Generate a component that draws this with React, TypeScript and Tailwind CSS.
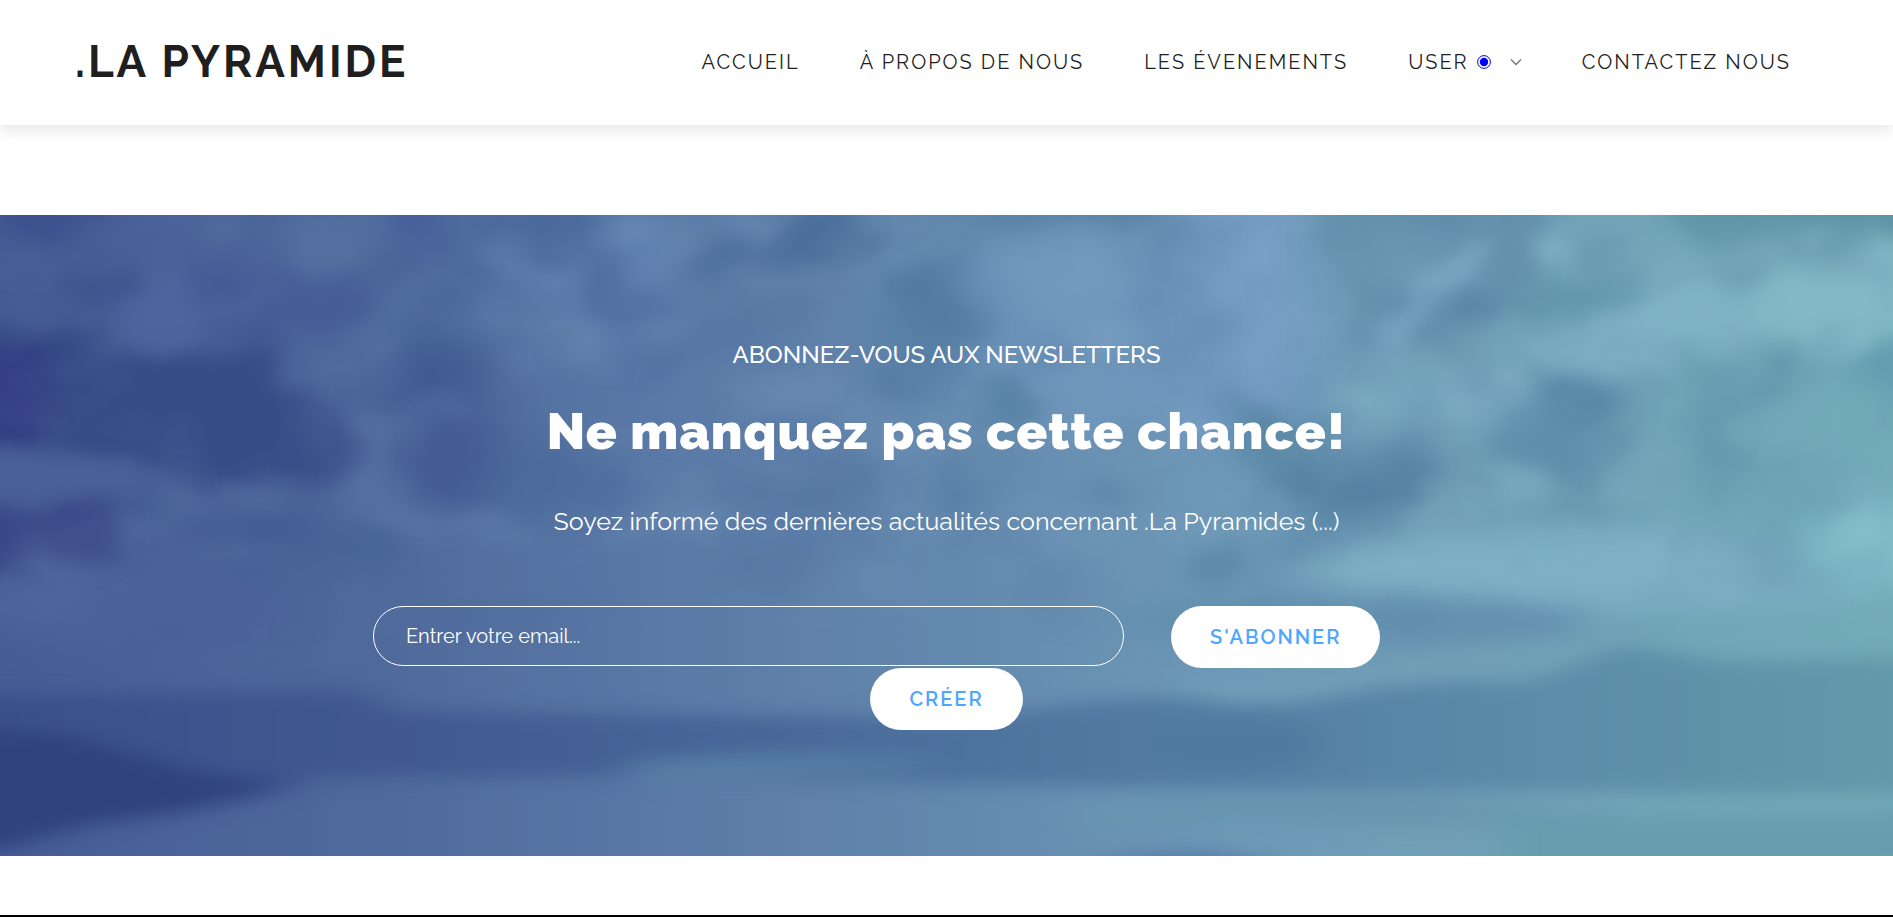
import React from "react";

const navLink = "flex items-center gap-2 whitespace-nowrap hover:text-[#4da6ff]";

function CircleDot() {
  return (
    <svg viewBox="0 0 14 14" className="size-[14px]" aria-hidden="true">
      <circle cx="7" cy="7" r="6.4" fill="none" stroke="#00f" strokeWidth="1" />
      <circle cx="7" cy="7" r="4.2" fill="#00f" />
    </svg>
  );
}

function Chevron() {
  return (
    <svg viewBox="0 0 12 8" className="ml-[11px] h-2 w-3" fill="none" stroke="#777" strokeWidth="1.5" aria-hidden="true">
      <path d="M1 1.5 6 6.5 11 1.5" />
    </svg>
  );
}

/* Cloudy sky with a violet-to-teal tint. */
function Sky() {
  return (
    <svg
      className="absolute inset-0 size-full"
      viewBox="0 0 1893 641"
      preserveAspectRatio="none"
      aria-hidden="true"
    >
      <defs>
        <linearGradient id="tint" x1="0" x2="1" y1="0" y2="0">
          <stop offset="0" stopColor="#475c95" />
          <stop offset="0.2" stopColor="#4e6a9b" />
          <stop offset="0.36" stopColor="#5b7aa7" />
          <stop offset="0.5" stopColor="#6388ad" />
          <stop offset="0.65" stopColor="#6e99b7" />
          <stop offset="0.82" stopColor="#71a3b8" />
          <stop offset="1" stopColor="#73abb7" />
        </linearGradient>
        <linearGradient id="shore" gradientUnits="userSpaceOnUse" x1="0" x2="1893" y1="0" y2="0">
          <stop offset="0" stopColor="#3b4f8c" />
          <stop offset="0.2" stopColor="#40588f" />
          <stop offset="0.4" stopColor="#486798" />
          <stop offset="0.6" stopColor="#527aa2" />
          <stop offset="0.8" stopColor="#5a8ba8" />
          <stop offset="1" stopColor="#6399aa" />
        </linearGradient>
        <linearGradient id="haze" x1="0" x2="0" y1="0" y2="1">
          <stop offset="0" stopColor="#fff" />
          <stop offset="0.5" stopColor="#fff" />
          <stop offset="0.68" stopColor="#000" />
        </linearGradient>
        <mask id="upper">
          <rect width="1893" height="641" fill="url(#haze)" />
        </mask>
        <filter id="soft" x="-20%" y="-40%" width="140%" height="180%" colorInterpolationFilters="sRGB">
          <feGaussianBlur stdDeviation="9" result="b" />
          <feTurbulence type="fractalNoise" baseFrequency="0.014 0.02" numOctaves="3" seed="7" result="n" />
          <feDisplacementMap in="b" in2="n" scale="60" xChannelSelector="R" yChannelSelector="G" />
          <feGaussianBlur stdDeviation="8" />
        </filter>
        <filter id="smooth" x="-20%" y="-40%" width="140%" height="180%" colorInterpolationFilters="sRGB">
          <feGaussianBlur stdDeviation="26 12" />
        </filter>
        <filter id="streak" x="-10%" y="-20%" width="120%" height="140%" colorInterpolationFilters="sRGB">
          <feGaussianBlur stdDeviation="18 9" />
        </filter>
        <filter id="light" x="0" y="0" width="100%" height="100%" colorInterpolationFilters="sRGB">
          <feTurbulence type="fractalNoise" baseFrequency="0.007 0.012" numOctaves="3" seed="21" />
          <feColorMatrix values="0 0 0 0 0.62  0 0 0 0 0.76  0 0 0 0 0.86  1.6 0 0 0 -0.78" />
          <feGaussianBlur stdDeviation="6" />
        </filter>
        <filter id="dark" x="0" y="0" width="100%" height="100%" colorInterpolationFilters="sRGB">
          <feTurbulence type="fractalNoise" baseFrequency="0.008 0.013" numOctaves="3" seed="4" />
          <feColorMatrix values="0 0 0 0 0.16  0 0 0 0 0.3  0 0 0 0 0.5  1.8 0 0 0 -0.86" />
          <feGaussianBlur stdDeviation="6" />
        </filter>
      </defs>
      <rect width="1893" height="641" fill="url(#tint)" />

      <g filter="url(#smooth)">
        <rect x="1170" y="-60" width="135" height="290" fill="#759cc3" />
        <ellipse cx="1060" cy="120" rx="120" ry="110" fill="#6e95ba" />
        <ellipse cx="1600" cy="355" rx="290" ry="40" fill="#7cafc4" />
        <ellipse cx="1870" cy="330" rx="85" ry="48" fill="#82bdc7" />
        <ellipse cx="240" cy="308" rx="80" ry="14" fill="#415a90" />
        <ellipse cx="700" cy="280" rx="130" ry="12" fill="#5275a1" />
        <ellipse cx="110" cy="395" rx="170" ry="38" fill="#4b6199" />
        <ellipse cx="1350" cy="405" rx="240" ry="25" fill="#628fae" />
        <ellipse cx="930" cy="110" rx="50" ry="70" fill="#577fa5" />
        <ellipse cx="440" cy="215" rx="60" ry="85" fill="#435b92" />
      </g>

      <g filter="url(#soft)">
        <ellipse cx="50" cy="0" rx="60" ry="18" fill="#3e5090" />
        <ellipse cx="260" cy="90" rx="110" ry="50" fill="#465d97" />
        <ellipse cx="165" cy="100" rx="45" ry="38" fill="#5065a0" />
        <ellipse cx="95" cy="75" rx="34" ry="26" fill="#41548f" />
        <ellipse cx="330" cy="30" rx="56" ry="30" fill="#53709f" />
        <ellipse cx="415" cy="20" rx="32" ry="40" fill="#485f9b" />
        <path d="M-60 115 45 105 134 130 268 145 345 185 370 255 200 268 89 245-60 232z" fill="#374b87" />
        <ellipse cx="10" cy="180" rx="50" ry="55" fill="#343f84" />
        <path d="M-60 284 103 287 118 315 60 350-60 365z" fill="#394788" />
        <path d="M375 150Q390 60 450 50" stroke="#55729f" strokeWidth="20" fill="none" />
        <path d="M285 155Q320 125 370 140T370 185" stroke="#4f6a9d" strokeWidth="16" fill="none" />
        <path d="M490 50Q590 40 588 140" stroke="#5f80ae" strokeWidth="22" fill="none" />
        <ellipse cx="540" cy="8" rx="70" ry="18" fill="#486698" />
        <ellipse cx="640" cy="30" rx="34" ry="28" fill="#6082af" />
        <path d="M660 40 720 60 850 50 900 10 820-10 780 20 700 25z" fill="#4d709c" />
        <ellipse cx="620" cy="90" rx="40" ry="34" fill="#5070a1" />
        <ellipse cx="750" cy="15" rx="32" ry="18" fill="#6787b2" />
        <ellipse cx="1005" cy="190" rx="30" ry="24" fill="#5983a5" />
        <ellipse cx="1060" cy="-4" rx="130" ry="18" fill="#5883a5" />
        <path d="M1325-40H1560L1530 80 1480 115 1370 135 1335 70z" fill="#6391ac" />
        <path d="M1395 140Q1410 70 1480 50" stroke="#7daac4" strokeWidth="30" fill="none" />
        <ellipse cx="1553" cy="38" rx="26" ry="24" fill="#7badc3" />
        <path d="M1640-40H1953V22L1700 30z" fill="#5e94a6" />
        <ellipse cx="1590" cy="80" rx="75" ry="22" fill="#6297ac" />
        <ellipse cx="1600" cy="140" rx="65" ry="32" fill="#7aabc2" />
        <ellipse cx="1690" cy="100" rx="70" ry="34" fill="#7fb3c5" />
        <ellipse cx="1845" cy="90" rx="85" ry="60" fill="#82b9c4" />
        <ellipse cx="1890" cy="155" rx="38" ry="38" fill="#629caf" />
        <ellipse cx="1440" cy="180" rx="110" ry="26" fill="#79a9c1" />
        <path d="M1235 185 1330 225 1455 250 1390 310 1310 290 1240 260z" fill="#5c8aa7" />
        <path d="M1560 155 1640 220 1570 290 1480 225z" fill="#5f90ab" />
        <ellipse cx="1735" cy="170" rx="60" ry="26" fill="#679db0" />
        <ellipse cx="1722" cy="245" rx="24" ry="44" fill="#679db0" />
        <ellipse cx="1800" cy="270" rx="60" ry="35" fill="#6ca2b2" />
        <ellipse cx="1216" cy="348" rx="28" ry="26" fill="#5c8aa6" />
        <ellipse cx="1510" cy="275" rx="40" ry="20" fill="#77a8be" />
      </g>

      <g mask="url(#upper)" opacity="0.28">
        <rect width="1893" height="641" filter="url(#light)" />
        <rect width="1893" height="641" filter="url(#dark)" />
      </g>

      <g filter="url(#streak)">
        <path d="M-60 232 90 242 190 268 90 282-60 280z" fill="#4b6098" />
        <path
          d="M-60 480 220 478 350 474 400 496 700 500 980 502 1080 488 1193 480 1394 466 1537 464 1621 430 1729 447 1960 440V580L1193 574 700 562 312 562 286 575 179 595 89 600-60 600z"
          fill="url(#shore)"
        />
        <path d="M-60 512 67 520 192 556 296 572 179 598 89 610-60 650z" fill="#30427f" />
        <path d="M620 548Q780 530 940 545L900 556 640 566z" fill="#567da5" />
        <ellipse cx="1240" cy="530" rx="80" ry="26" fill="#507a9f" />
        <path d="M1180 464Q1320 474 1400 456T1537 458L1535 468Q1420 462 1340 480T1180 480z" fill="#719fb8" />
        <path d="M1080 592Q1300 568 1500 590T1960 592V608Q1400 612 1080 608z" fill="#6896b0" />
        <path d="M1500 600H1960V660H1500z" fill="#679daf" />
        <path d="M1060 660Q1200 612 1300 660z" fill="#5480a6" />
      </g>
    </svg>
  );
}

const pill =
  "h-[62px] cursor-pointer rounded-[31px] bg-white px-[39px] text-[20px] font-semibold tracking-[2px] text-[#4da6ff] uppercase";

export default function App() {
  return (
    <div className="bg-white font-[Raleway,Lato,sans-serif] text-[#1f1f1f]">
      <header className="relative flex h-[125px] items-center justify-between bg-white pr-[102px] pb-[2px] pl-[75px] shadow-[0_5px_15px_rgba(0,0,0,0.1)]">
        <a href="#" className="text-[44px] leading-none font-bold tracking-[3px] whitespace-nowrap">
          .LA PYRAMIDE
        </a>
        <nav className="flex items-center gap-[60px] text-[20px] tracking-[2px]">
          <a href="#" className={navLink}>ACCUEIL</a>
          <a href="#" className={navLink}>À PROPOS DE NOUS</a>
          <a href="#" className={navLink}>LES ÉVENEMENTS</a>
          <a href="#" className={navLink}>
            USER
            <CircleDot />
            <Chevron />
          </a>
          <a href="#" className={navLink}>CONTACTEZ NOUS</a>
        </nav>
      </header>

      <main className="pt-[90px] pb-[59px]">
        <section className="relative overflow-hidden bg-[#5d7ca9] pt-[122px] pb-[126px] text-center text-white">
          <Sky />
          <div className="relative mx-auto flex max-w-[1147px] flex-col items-center">
            <p className="text-[24px] leading-9 font-medium">ABONNEZ-VOUS AUX NEWSLETTERS</p>
            <h1 className="mt-[23px] text-[51px] leading-[70px] font-black tracking-[1px]">Ne manquez pas cette chance!</h1>
            <p className="mt-[35px] text-[25px] leading-10">Soyez informé des dernières actualités concernant .La Pyramides (...)</p>
            <form className="mt-[65px] flex w-full flex-col items-center" onSubmit={(e) => e.preventDefault()}>
              <div className="flex w-full items-start gap-[47px]">
                <input
                  type="email"
                  aria-label="Email"
                  placeholder="Entrer votre email..."
                  className="h-[60px] w-[751px] rounded-[30px] border border-white bg-transparent px-8 text-[20px] text-white outline-none placeholder:text-white"
                />
                <button type="submit" className={pill}>S'abonner</button>
              </div>
              <button type="button" className={pill}>Créer</button>
            </form>
          </div>
        </section>
      </main>
      <footer className="h-[2px] bg-black" />
    </div>
  );
}
